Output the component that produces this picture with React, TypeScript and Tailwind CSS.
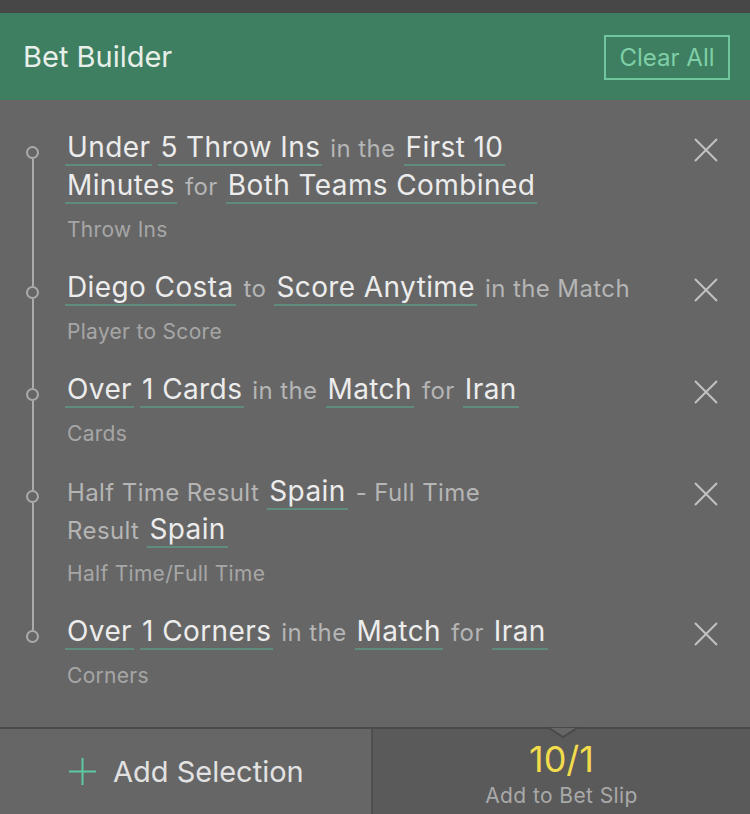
import React from "react";

type Seg = [0 | 1, string];
type Row = { lines: Seg[][]; sub: string };

const rows: Row[] = [
  {
    lines: [
      [[1, "Under"], [1, "5 Throw Ins"], [0, "in the"], [1, "First 10"]],
      [[1, "Minutes"], [0, "for"], [1, "Both Teams Combined"]],
    ],
    sub: "Throw Ins",
  },
  {
    lines: [[[1, "Diego Costa"], [0, "to"], [1, "Score Anytime"], [0, "in the Match"]]],
    sub: "Player to Score",
  },
  {
    lines: [[[1, "Over"], [1, "1 Cards"], [0, "in the"], [1, "Match"], [0, "for"], [1, "Iran"]]],
    sub: "Cards",
  },
  {
    lines: [
      [[0, "Half Time Result"], [1, "Spain"], [0, "- Full Time"]],
      [[0, "Result"], [1, "Spain"]],
    ],
    sub: "Half Time/Full Time",
  },
  {
    lines: [[[1, "Over"], [1, "1 Corners"], [0, "in the"], [1, "Match"], [0, "for"], [1, "Iran"]]],
    sub: "Corners",
  },
];

function Chip({ children }: { children: React.ReactNode }) {
  return (
    <span className="inline-block border-b-2 border-[#5f8c7d] px-[2px] text-[28px] leading-[34px] tracking-[0.4px] text-[#ececec]">
      {children}
    </span>
  );
}

function Conn({ children }: { children: React.ReactNode }) {
  return (
    <span className="px-[2px] text-[24px] leading-[34px] tracking-[0.4px] text-[#b5b5b5]">{children}</span>
  );
}

function XIcon() {
  return (
    <svg width="24" height="24" viewBox="0 0 24 24">
      <path d="M1 1 L23 23 M23 1 L1 23" stroke="#c2c2c2" strokeWidth="2" fill="none" />
    </svg>
  );
}

export default function App() {
  return (
    <div className="flex h-[814px] w-[750px] flex-col overflow-hidden bg-[#666666] [font-family:Inter,sans-serif]">
      <div className="h-[13px] bg-[#474747]" />
      <div className="flex h-[87px] items-center justify-between bg-[#3d7f60] pl-[23px] pr-[20px]">
        <span className="text-[29px] leading-[36px] text-[#e8efea]">Bet Builder</span>
        <button className="mt-[2px] flex h-[45px] w-[126px] items-center justify-center border-2 border-[#72c69d] text-[24px] text-[#80cfa8]">
          Clear All
        </button>
      </div>
      <div className="flex-1 pt-[30px]">
        {rows.map((row, i) => {
          const first = i === 0;
          const last = i === rows.length - 1;
          return (
            <div key={i} className="flex">
              <div className="ml-[26px] flex w-[13px] flex-col items-center">
                <div className={`w-[2px] ${first ? "h-[16px]" : "h-[44px] bg-[#ababab]"}`} />
                <div className="h-[13px] w-[13px] rounded-full border-2 border-[#ababab]" />
                <div className={`w-[2px] flex-1 ${last ? "" : "bg-[#ababab]"}`} />
              </div>
              <div className={`ml-[26px] flex-1 ${first ? "" : "pt-[28px]"}`}>
                {row.lines.map((line, j) => (
                  <div key={j} className="flex h-[38px] items-baseline gap-x-[6px] whitespace-nowrap">
                    {line.map(([k, t], m) => (k ? <Chip key={m}>{t}</Chip> : <Conn key={m}>{t}</Conn>))}
                  </div>
                ))}
                <div className="mt-[12px] pl-[2px] text-[21px] leading-[24px] tracking-[0.3px] text-[#a6a6a6]">
                  {row.sub}
                </div>
              </div>
              <div className={`mr-[32px] ${first ? "pt-[8px]" : "pt-[36px]"}`}>
                <XIcon />
              </div>
            </div>
          );
        })}
      </div>
      <div className="relative grid h-[87px] grid-cols-[373px_1fr] border-t-2 border-[#4a4a4a]">
        <div className="flex items-center gap-[17px] border-r-2 border-[#4f4f4f] bg-[#666666] pl-[69px]">
          <svg width="27" height="27" viewBox="0 0 27 27">
            <path d="M13.5 0 V27 M0 13.5 H27" stroke="#5cc9a2" strokeWidth="2" fill="none" />
          </svg>
          <span className="text-[29px] leading-[34px] text-[#e2e2e2]">Add Selection</span>
        </div>
        <div className="flex flex-col items-center bg-[#5a5a5a] pt-[10px]">
          <span className="text-[36px] leading-[40px] text-[#f2dc4c]">10/1</span>
          <span className="mt-[5px] text-[21px] leading-[24px] tracking-[0.4px] text-[#a9a9a9]">
            Add to Bet Slip
          </span>
        </div>
        <svg
          className="absolute left-[549px] top-[-2px]"
          width="28"
          height="12"
          viewBox="0 0 28 12"
        >
          <path d="M0 1 L14 10 L28 1 Z" fill="#666666" />
          <path d="M0 1 L14 10 L28 1" stroke="#4a4a4a" strokeWidth="2" fill="none" />
        </svg>
      </div>
    </div>
  );
}
